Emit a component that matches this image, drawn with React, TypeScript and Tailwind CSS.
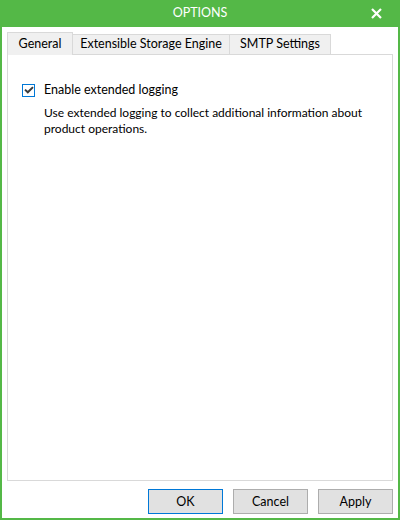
import React from "react";

const font = { fontFamily: 'Lato, "Noto Sans", sans-serif' };

function Tab({ label, active, className = "" }: { label: string; active?: boolean; className?: string }) {
  return (
    <div
      className={
        "flex items-center justify-center border border-b-0 border-[#d9d9d9] bg-[#f0f0f0] text-[12.5px] text-black " +
        (active ? "z-10 -mb-px h-[23px]" : "mt-[2px] h-[20px]") +
        " " +
        className
      }
    >
      {label}
    </div>
  );
}

function Button({ label, primary }: { label: string; primary?: boolean }) {
  return (
    <button
      className={
        "flex h-[25px] w-[75px] items-center justify-center border bg-[#e1e1e1] pt-px text-[12.5px] text-black " +
        (primary ? "border-[#0078d7]" : "border-[#adadad]")
      }
    >
      {label}
    </button>
  );
}

export default function App() {
  return (
    <div style={font} className="flex h-[520px] w-[400px] flex-col border-x-2 border-b-2 border-[#54b847] bg-white">
      {/* title bar */}
      <div className="relative -mx-[2px] flex h-[27px] shrink-0 items-center justify-center bg-[#54b847] text-[12.5px] text-white">
        OPTIONS
        <svg className="absolute right-[18px] top-[8px]" width="11" height="11" viewBox="0 0 11 11">
          <path d="M1 1 L10 10 M10 1 L1 10" stroke="white" strokeWidth="2.2" />
        </svg>
      </div>

      <div className="flex flex-1 flex-col px-[5px] pt-[5px]">
        {/* tabs */}
        <div className="flex items-start">
          <Tab label="General" active className="w-[66px]" />
          <Tab label="Extensible Storage Engine" className="-ml-px w-[158px]" />
          <Tab label="SMTP Settings" className="-ml-px w-[102px]" />
        </div>

        {/* panel */}
        <div className="flex-1 border border-[#d9d9d9] bg-white px-[14px] pt-[26px]">
          <label className="flex items-center gap-[9px] text-[12.5px] text-black">
            <span className="flex h-[13px] w-[13px] items-center justify-center border border-[#0078d7] bg-white">
              <svg width="10" height="8" viewBox="0 0 10 8">
                <path d="M1 3.6 L3.8 6.3 L9 1.1" fill="none" stroke="#3c3c3c" strokeWidth="2" />
              </svg>
            </span>
            Enable extended logging
          </label>
          <p className="mt-[5px] whitespace-nowrap pl-[22px] text-[12px] leading-[16px] text-black">
            Use extended logging to collect additional information about
            <br />
            product operations.
          </p>
        </div>

        {/* buttons */}
        <div className="flex justify-end gap-[10px] pt-[8px] pb-[4px]">
          <Button label="OK" primary />
          <Button label="Cancel" />
          <Button label="Apply" />
        </div>
      </div>
    </div>
  );
}
